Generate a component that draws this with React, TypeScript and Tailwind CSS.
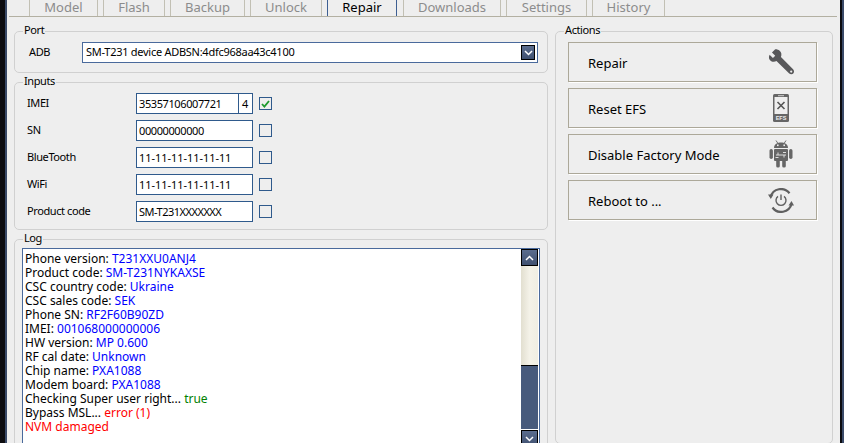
import React from 'react';

const font = { fontFamily: '"Noto Sans", sans-serif' };

const tabs = [
    { label: 'Model', width: 'w-[69px]', gap: 'ml-[20px]' },
    { label: 'Flash', width: 'w-[62px]', gap: 'ml-[5px]' },
    { label: 'Backup', width: 'w-[75px]', gap: 'ml-[5px]' },
    { label: 'Unlock', width: 'w-[72px]', gap: 'ml-[5px]' },
    { label: 'Repair', width: 'w-[70px]', gap: 'ml-[5px]', active: true },
    { label: 'Downloads', width: 'w-[98px]', gap: 'ml-[6px]' },
    { label: 'Settings', width: 'w-[81px]', gap: 'ml-[5px]' },
    { label: 'History', width: 'w-[73px]', gap: 'ml-[5px]' },
];

const logLines: [string, string, string][] = [
    ['Phone version: ', 'T231XXU0ANJ4', 'text-[#0000ff]'],
    ['Product code: ', 'SM-T231NYKAXSE', 'text-[#0000ff]'],
    ['CSC country code: ', 'Ukraine', 'text-[#0000ff]'],
    ['CSC sales code: ', 'SEK', 'text-[#0000ff]'],
    ['Phone SN: ', 'RF2F60B90ZD', 'text-[#0000ff]'],
    ['IMEI: ', '001068000000006', 'text-[#0000ff]'],
    ['HW version: ', 'MP 0.600', 'text-[#0000ff]'],
    ['RF cal date: ', 'Unknown', 'text-[#0000ff]'],
    ['Chip name: ', 'PXA1088', 'text-[#0000ff]'],
    ['Modem board: ', 'PXA1088', 'text-[#0000ff]'],
    ['Checking Super user right... ', 'true', 'text-[#008000]'],
    ['Bypass MSL... ', 'error (1)', 'text-[#ff0000]'],
    ['', 'NVM damaged', 'text-[#ff0000]'],
];

const Group = ({ title, className, children }: { title: string; className: string; children: React.ReactNode }) => (
    <fieldset className={`border border-[#d0d0d0] rounded-[5px] ${className}`}>
        <legend className="ml-[8px] px-[1px] h-[14px] text-[11px] tracking-[-0.4px] leading-[12px] text-black">{title}</legend>
        {children}
    </fieldset>
);

const Field = ({ value, className = 'tracking-[-0.4px]' }: { value: string; className?: string }) => (
    <div className={`w-[117px] h-[21px] px-[2px] bg-white border border-[#2f5a8c] text-[11px] leading-[19px] text-black ${className}`}>{value}</div>
);

const Check = ({ checked }: { checked?: boolean }) => (
    <div className="w-[13px] h-[13px] ml-[6px] bg-[#eeeeee] border border-[#2f5a8c] flex items-center justify-center">
        {checked && (
            <svg width="9" height="8" viewBox="0 0 9 8">
                <path d="M1 4l2.4 2.6L8 1" fill="none" stroke="#1e9a2e" strokeWidth="1.8" />
            </svg>
        )}
    </div>
);

const Row = ({ label, children }: { label: string; children: React.ReactNode }) => (
    <div className="flex items-center h-[21px]">
        <span className="w-[121px] pl-[12px] text-[11px] tracking-[-0.4px] text-black">{label}</span>
        {children}
    </div>
);

const WrenchIcon = () => (
    <svg width="29" height="28" viewBox="0 0 30 30">
        <path d="M8 1.5 L4.8 4.8 L8.3 8.3 L5.8 10.8 L2.2 7.3 C0.8 10 1.6 13 4 14.2 C6 15.2 8 15 9.6 14 L23 27 C24.4 28.4 26.8 28.4 27.8 27 C28.8 25.8 28.6 24 27.4 22.8 L14.4 9.6 C15.4 7.4 15 4.6 13 3 C11.6 1.8 9.6 1.2 8 1.5 Z" fill="#58585a" />
        <circle cx="25.4" cy="25.2" r="1.2" fill="#eeeeee" />
    </svg>
);

const PhoneIcon = () => (
    <svg width="16" height="28" viewBox="0 0 16 28">
        <rect x="0" y="0" width="16" height="28" rx="1.5" fill="#666666" />
        <rect x="1.5" y="3" width="13" height="17" fill="#eeeeee" />
        <path d="M4.5 8l7 7M11.5 8l-7 7" stroke="#555555" strokeWidth="1.6" />
        <rect x="5" y="1.2" width="6" height="1" fill="#cccccc" />
        <text x="8" y="26" textAnchor="middle" fontSize="5.5" fontWeight="700" fill="#eeeeee" fontFamily="Liberation Sans">EFS</text>
    </svg>
);

const AndroidIcon = () => (
    <svg width="24" height="28" viewBox="0 0 24 28">
        <path d="M7 0.5l2 3M17 0.5l-2 3" stroke="#707070" strokeWidth="1" />
        <path d="M5 8 C5 4 8.5 2.5 12 2.5 C15.5 2.5 19 4 19 8 Z" fill="#666666" />
        <rect x="8" y="4.5" width="1.6" height="1.6" fill="#eeeeee" />
        <rect x="14.4" y="4.5" width="1.6" height="1.6" fill="#eeeeee" />
        <rect x="5" y="9" width="14" height="12" rx="1" fill="#666666" />
        <rect x="0.5" y="9" width="3.4" height="10" rx="1.7" fill="#666666" />
        <rect x="20.1" y="9" width="3.4" height="10" rx="1.7" fill="#666666" />
        <rect x="7.2" y="20" width="3.6" height="7.5" rx="1.6" fill="#666666" />
        <rect x="13.2" y="20" width="3.6" height="7.5" rx="1.6" fill="#666666" />
        <path d="M7 15h10M9 12.5v2.5M15 15v2.5M6.5 17.5h3M14 12.5h3" stroke="#dddddd" strokeWidth="1" fill="none" />
    </svg>
);

const RebootIcon = () => (
    <svg width="26" height="25" viewBox="0 0 26 25">
        <path d="M2.6 9 A10.8 10.8 0 0 1 21.5 5.2" fill="none" stroke="#606060" strokeWidth="2.2" />
        <path d="M23.6 16 A10.8 10.8 0 0 1 4.5 19.5" fill="none" stroke="#606060" strokeWidth="2.2" />
        <path d="M0 6.5 L5.5 6.5 L2.8 11 Z" fill="#606060" />
        <path d="M20.5 17.5 L26 17.5 L23.5 13 Z" fill="#606060" />
        <path d="M10 8.4 A5 5 0 1 0 16 8.4" fill="none" stroke="#606060" strokeWidth="1.4" />
        <path d="M13 6.5v5.5" stroke="#606060" strokeWidth="1.4" />
    </svg>
);

const ActionButton = ({ label, icon }: { label: string; icon: React.ReactNode }) => (
    <div className="flex items-center justify-between h-[40px] pl-[19px] bg-[#eeeeee] border border-[#aca899] shadow-[1px_1px_0_#ffffff] text-[13px] text-black">
        <span className="pt-[3px]">{label}</span>
        <div className="w-[70px] flex items-center justify-center">{icon}</div>
    </div>
);

const ScrollButton = ({ up, className }: { up?: boolean; className: string }) => (
    <div className={`flex items-center justify-center bg-gradient-to-b from-[#5b6d8e] to-[#3f5070] border border-black ${className}`}>
        <svg width="9" height="6" viewBox="0 0 9 6">
            <path d={up ? 'M1 5l3.5-3.5L8 5' : 'M1 1l3.5 3.5L8 1'} fill="none" stroke="#ffffff" strokeWidth="1.5" />
        </svg>
    </div>
);

const App = () => {
    return (
        <div className="w-[844px] h-[443px] overflow-hidden flex bg-[#eeeeee]" style={font}>
            <div className="w-[5px] shrink-0 bg-[#0c0c10]" />
            <div className="w-[2px] shrink-0 bg-[#3a4a68]" />

            <div className="w-[833px] shrink-0 flex flex-col">
                <div className="flex h-[17px] shrink-0 ml-[2px] w-[828px] border-b border-[#b3b0a2]">
                    {tabs.map((tab) => (
                        <div
                            key={tab.label}
                            className={`${tab.width} ${tab.gap} h-[16px] border-x text-center text-[13px] leading-[14px] ${
                                tab.active
                                    ? 'border-[#3d5f92] text-black'
                                    : 'border-[#c2c0b4] text-[#8c8c8c]'
                            }`}
                        >
                            {tab.label}
                        </div>
                    ))}
                </div>

                <div className="flex mt-[7px] pl-[7px] gap-[7px]">
                    <div className="w-[534px] flex flex-col gap-[2px]">
                        <Group title="Port" className="h-[49px]">
                            <div className="flex items-center h-[21px] mt-[4px] px-[7px]">
                                <span className="w-[60px] pl-[7px] text-[11px] tracking-[-0.4px] text-black">ADB</span>
                                <div className="w-[456px] h-[21px] pl-[3px] pr-[2px] flex items-center justify-between bg-white border border-[#4a6a9c] text-[11px] tracking-[-0.27px] text-black">
                                    <span>SM-T231 device ADBSN:4dfc968aa43c4100</span>
                                    <ScrollButton className="w-[14px] h-[15px]" />
                                </div>
                            </div>
                        </Group>

                        <Group title="Inputs" className="h-[155px]">
                            <div className="flex flex-col gap-[6px] mt-[4px]">
                                <Row label="IMEI">
                                    <div className="w-[117px] h-[21px] flex bg-white border border-[#2f5a8c] text-[11px] tracking-[-0.4px] leading-[19px] text-black">
                                        <span className="w-[102px] pl-[2px] border-r border-[#2f5a8c]">35357106007721</span>
                                        <span className="pl-[3px]">4</span>
                                    </div>
                                    <Check checked />
                                </Row>
                                <Row label="SN"><Field value="00000000000" /><Check /></Row>
                                <Row label="BlueTooth"><Field value="11-11-11-11-11-11" className="tracking-[-0.05px]" /><Check /></Row>
                                <Row label="WiFi"><Field value="11-11-11-11-11-11" className="tracking-[-0.05px]" /><Check /></Row>
                                <Row label="Product code"><Field value="SM-T231XXXXXXX" className="tracking-[-0.5px]" /><Check /></Row>
                            </div>
                        </Group>

                        <Group title="Log" className="h-[220px]">
                            <div className="flex h-[200px] mt-[2px] mx-[7px] bg-white border border-[#4a6a9c]">
                                <div className="flex-1 pl-[2px] pt-[3px] text-[12px] leading-[14px] text-black">
                                    {logLines.map(([prefix, value, color]) => (
                                        <div key={prefix + value}>
                                            {prefix}<span className={color}>{value}</span>
                                        </div>
                                    ))}
                                </div>
                                <div className="w-[17px] mr-[1px] flex flex-col shrink-0">
                                    <ScrollButton up className="h-[17px] shrink-0" />
                                    <div className="h-[99px] shrink-0 bg-gradient-to-r from-[#e2dfd0] via-[#f4f2e8] to-[#f0eee2]" />
                                    <div className="h-[64px] shrink-0 bg-[#475a7c] border-t border-black" />
                                    <ScrollButton className="h-[17px] mt-[1px] shrink-0" />
                                </div>
                            </div>
                        </Group>
                    </div>

                    <Group title="Actions" className="w-[278px] h-[420px]">
                        <div className="flex flex-col gap-[6px] mt-[4px] pl-[12px] pr-[15px]">
                            <ActionButton label="Repair" icon={<WrenchIcon />} />
                            <ActionButton label="Reset EFS" icon={<PhoneIcon />} />
                            <ActionButton label="Disable Factory Mode" icon={<AndroidIcon />} />
                            <ActionButton label="Reboot to ..." icon={<RebootIcon />} />
                        </div>
                    </Group>
                </div>
            </div>

            <div className="w-[2px] shrink-0 bg-[#0c0c10]" />
            <div className="w-[2px] shrink-0 bg-[#3a4a68]" />
        </div>
    );
};

export default App;
